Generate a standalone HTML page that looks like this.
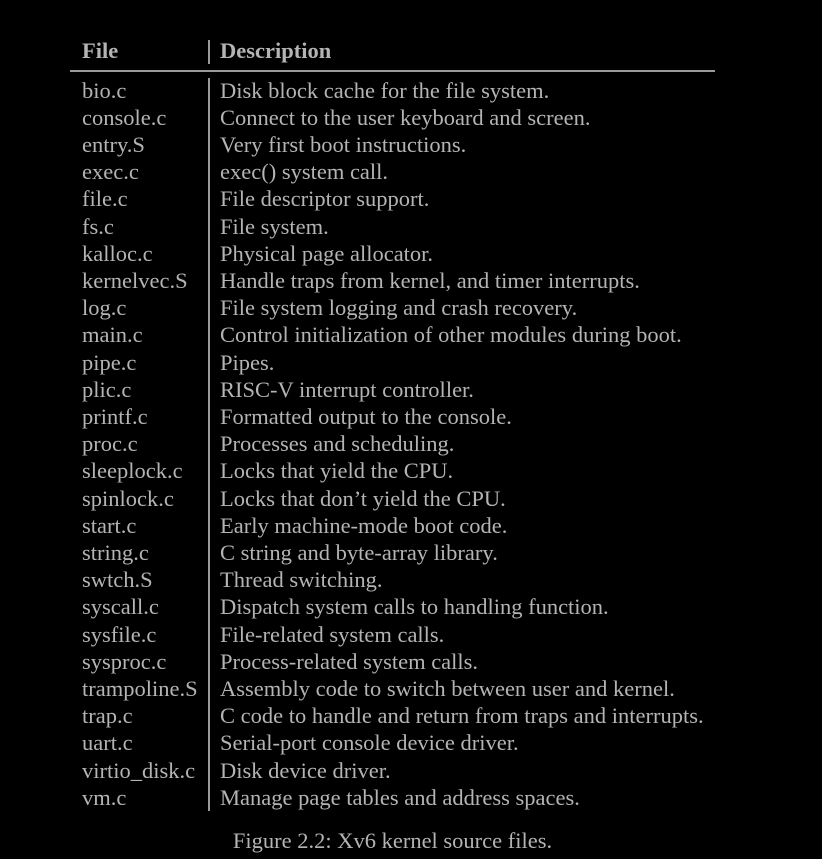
<!DOCTYPE html>
<html><head><style>
body{margin:0;background:#000;width:822px;height:859px;overflow:hidden;position:relative;font-family:"Liberation Serif",serif;color:#b4b4b4;font-size:22.5px}
.h{position:absolute;top:37px;font-weight:bold;line-height:27px}
.col{position:absolute;top:76.5px;line-height:27.2px;white-space:pre}
.vl{position:absolute;left:208px;width:1.5px;background:#9a9a9a}
</style></head><body>
<div class="h" style="left:82px">File</div>
<div class="h" style="left:220px">Description</div>
<div class="vl" style="top:40px;height:24px"></div>
<div style="position:absolute;left:70px;top:70px;width:645px;height:1.5px;background:#9a9a9a"></div>
<div class="vl" style="top:78px;height:733px"></div>
<div class="col" style="left:82px">bio.c
console.c
entry.S
exec.c
file.c
fs.c
kalloc.c
kernelvec.S
log.c
main.c
pipe.c
plic.c
printf.c
proc.c
sleeplock.c
spinlock.c
start.c
string.c
swtch.S
syscall.c
sysfile.c
sysproc.c
trampoline.S
trap.c
uart.c
virtio_disk.c
vm.c</div>
<div class="col" style="left:220px">Disk block cache for the file system.
Connect to the user keyboard and screen.
Very first boot instructions.
exec() system call.
File descriptor support.
File system.
Physical page allocator.
Handle traps from kernel, and timer interrupts.
File system logging and crash recovery.
Control initialization of other modules during boot.
Pipes.
RISC-V interrupt controller.
Formatted output to the console.
Processes and scheduling.
Locks that yield the CPU.
Locks that don’t yield the CPU.
Early machine-mode boot code.
C string and byte-array library.
Thread switching.
Dispatch system calls to handling function.
File-related system calls.
Process-related system calls.
Assembly code to switch between user and kernel.
C code to handle and return from traps and interrupts.
Serial-port console device driver.
Disk device driver.
Manage page tables and address spaces.</div>
<div style="position:absolute;left:0;width:785px;text-align:center;top:827px;line-height:27px">Figure 2.2: Xv6 kernel source files.</div>
</body></html>
